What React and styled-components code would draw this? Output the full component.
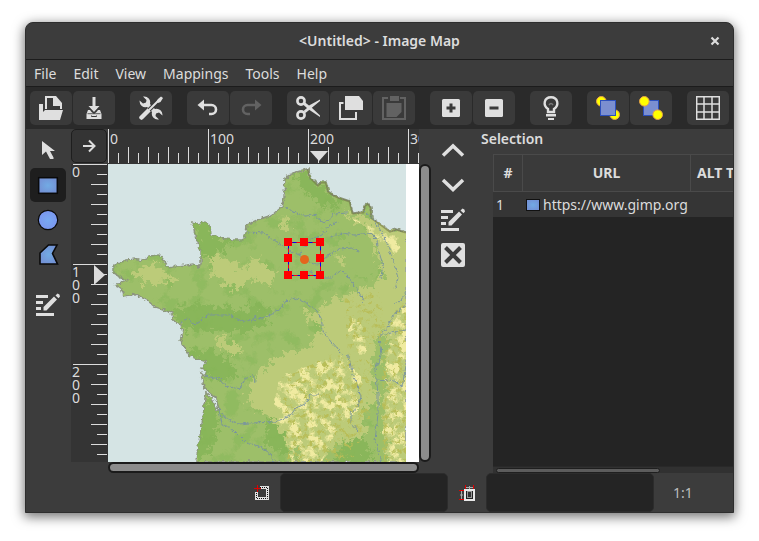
import React, { useState } from 'react';
import styled, { createGlobalStyle } from 'styled-components';

const GlobalStyle = createGlobalStyle`
  * {
    box-sizing: border-box;
  }

  body {
    margin: 0;
    background: #fff;
    color: #dcdcdc;
    font-family: 'Noto Sans', 'Open Sans', sans-serif;
    font-size: 14px;
    line-height: 20px;
  }

  button, input {
    font: inherit;
    color: inherit;
  }

  svg {
    display: block;
    flex: none;
  }
`;

const Page = styled.div`
  display: flex;
  min-height: 100vh;
  padding: 22px 25px 28px;
`;

const Window = styled.div`
  display: flex;
  flex: 1;
  flex-direction: column;
  min-width: 0;
  overflow: hidden;
  background: #3c3c3c;
  border: 1px solid #2e2e2e;
  border-radius: 8px 8px 0 0;
  box-shadow: 0 3px 12px 1px rgba(0, 0, 0, 0.55);
`;

const TitleBar = styled.header`
  display: grid;
  grid-template-columns: 36px 1fr 36px;
  align-items: center;
  height: 37px;
  border-bottom: 1px solid #1c1c1c;
`;

const Title = styled.h1`
  grid-column: 2;
  margin: 0;
  font-size: 14px;
  font-weight: 600;
  text-align: center;
`;

const CloseButton = styled.button`
  display: flex;
  align-items: center;
  justify-content: center;
  height: 36px;
  padding: 0;
  background: none;
  border: 0;
`;

const MenuBar = styled.nav`
  display: flex;
  gap: 1px;
  height: 27px;
  border-bottom: 1px solid #1c1c1c;
`;

const MenuButton = styled.button`
  padding: 2px 8px 0;
  background: none;
  border: 0;
`;

const Toolbar = styled.div`
  display: flex;
  gap: 15px;
  height: 42px;
  padding: 4px;
  overflow: hidden;
  background: #2a2a2a;
`;

const ToolGroup = styled.div`
  display: flex;
  gap: 1px;
`;

const ToolButton = styled.button`
  display: flex;
  align-items: center;
  justify-content: center;
  width: 42px;
  height: 34px;
  padding: 0;
  background: #3a3a3a;
  border: 0;
  border-radius: 5px;
  color: ${({ disabled }) => (disabled ? '#626262' : '#dfdfdf')};
`;

const Main = styled.main`
  display: grid;
  flex: 1;
  grid-template-columns: 45px minmax(0, 360fr) 44px minmax(0, 258fr);
  min-height: 0;
`;

const SideTools = styled.div`
  display: flex;
  flex-direction: column;
  gap: 1px;
  padding: 4px;
`;

const SideButton = styled.button`
  display: flex;
  align-items: center;
  justify-content: center;
  width: 36px;
  height: 34px;
  margin-top: ${({ $apart }) => ($apart ? '15px' : 0)};
  padding: 0;
  background: ${({ $active }) => ($active ? '#1e1e1e' : 'transparent')};
  border: 0;
  border-radius: 5px;
  color: #dfdfdf;
`;

const Editor = styled.section`
  display: grid;
  grid-template-areas:
    'corner top .'
    'left canvas vscroll'
    '. hscroll .';
  grid-template-columns: 37px minmax(0, 1fr) 12px;
  grid-template-rows: 35px minmax(298px, 1fr) 11px;
`;

const CornerButton = styled.button`
  display: flex;
  grid-area: corner;
  align-items: center;
  justify-content: center;
  margin: 0 1px 1px 0;
  padding: 0;
  background: #343434;
  border: 1px solid #1e1e1e;
  border-radius: 5px;
`;

const RulerBox = styled.div`
  grid-area: ${({ $area }) => $area};
  min-width: 0;
  min-height: 0;
  overflow: hidden;
  background: #343434;
`;

const RulerSvg = styled.svg`
  width: 100%;
  height: 100%;
  fill: #dcdcdc;
  font-size: 14px;
`;

const Canvas = styled.div`
  grid-area: canvas;
  min-width: 0;
  overflow: hidden;
  background: #fff;
`;

const Scrollbar = styled.div`
  grid-area: ${({ $area }) => $area};
  background: #8c8c8c;
  border: 2px solid #1b1b1b;
  border-radius: 6px;
`;

const Selection = styled.section`
  display: flex;
  flex-direction: column;
  min-width: 0;
  padding-left: 6px;
`;

const SelectionTitle = styled.h2`
  margin: 0;
  padding-bottom: 5px;
  font-size: 14px;
  font-weight: 600;
`;

const ListFrame = styled.div`
  display: flex;
  flex: 1;
  flex-direction: column;
  margin-left: 12px;
  overflow: hidden;
  background: #242424;
`;

const AreaTable = styled.table`
  width: 320px;
  table-layout: fixed;
  border-collapse: separate;
  border-spacing: 0;
`;

const HeadCell = styled.th`
  width: ${({ $width }) => $width};
  height: 38px;
  padding: 0 6px;
  overflow: hidden;
  background: #3a3a3a;
  border: solid #4a4a4a;
  border-width: 1px 1px 1px 0;
  font-weight: 700;
  text-align: ${({ $align }) => $align || 'center'};
  white-space: nowrap;

  &:first-child {
    border-left-width: 1px;
  }
`;

const Cell = styled.td`
  height: 25px;
  padding: 0 3px;
  background: #353535;
  white-space: nowrap;
`;

const UrlEntry = styled.div`
  display: flex;
  align-items: center;
  gap: 3px;
`;

const ListScroll = styled.div`
  height: 7px;
  margin-top: auto;
  padding: 1px 3px;
  background: #313131;
  border-top: 1px solid #292929;
`;

const ListThumb = styled.div`
  width: 70%;
  height: 5px;
  background: #5c5c5c;
  border: 1px solid #1f1f1f;
  border-radius: 3px;
`;

const StatusBar = styled.footer`
  display: flex;
  justify-content: flex-end;
  height: 39px;
`;

const StatusLabel = styled.label`
  display: flex;
  align-items: center;
  justify-content: center;
  width: 38px;
`;

const StatusInput = styled.input`
  width: 168px;
  min-width: 0;
  padding: 0 8px;
  background: #242424;
  border: 1px solid #2c2c2c;
  border-radius: 5px;
`;

const Zoom = styled.output`
  display: flex;
  align-items: center;
  width: 79px;
  padding-left: 19px;
  color: #bdbdbd;
`;

const Svg = ({ size = 24, children }) => (
  <svg width={size} height={size} viewBox={`0 0 ${size} ${size}`} fill="currentColor" aria-hidden="true">
    {children}
  </svg>
);

const OpenIcon = () => (
  <Svg>
    <path d="M0 8h4v8l2-2h18l-3 10H0z" />
    <path d="M7 13V1h8l7 8v4" fill="none" stroke="currentColor" strokeWidth="2" />
    <path d="M14 0h3l6 7v3h-9z" />
  </Svg>
);

const SaveIcon = () => (
  <Svg>
    <path d="M10.500 1h3v9h4L12 16l-5.500-6h4z" />
    <path d="M6 14h2l1.500 2L12 18l2.500-2 1.500-2h2l1.500 4h-15z" />
    <path d="M4.500 18h15v5h-15z" />
    <path d="M9.500 19.500v1h5v-1" fill="none" stroke="#3a3a3a" />
    <path d="M5.500 17.700h13" stroke="#3a3a3a" strokeWidth="0.800" />
  </Svg>
);

const ToolsIcon = () => (
  <Svg>
    <path d="M7 7l10 10" stroke="currentColor" strokeWidth="4" />
    <path d="M4 .6a6 6 0 0 1 6.800 8l-3 2.500A6 6 0 0 1 .6 4.500L4 7.500l3-1L7.500 4z" />
    <path d="M20 23.400a6 6 0 0 1-6.800-8l3-2.500a6 6 0 0 1 7.200 6.600L20 16.500l-3 1-.5 2.500z" />
    <path d="M3 21.500l6.500-6.500" stroke="#3a3a3a" strokeWidth="6" />
    <path d="M2.500 21.500L10 14" stroke="currentColor" strokeWidth="4.500" strokeLinecap="round" />
    <path d="M10 14L20 4" stroke="#3a3a3a" strokeWidth="4" />
    <path d="M9 15L20 4" stroke="currentColor" strokeWidth="2" />
    <path d="M19 3l3-2.500L24 2l-2.500 4-2.500 1-1.500-1.500z" />
  </Svg>
);

const UndoIcon = () => (
  <Svg>
    <path d="M8 3.500v11L1.500 9z" />
    <path d="M7 9h8.500a4.500 4.500 0 0 1 0 9H13" fill="none" stroke="currentColor" strokeWidth="2.600" />
  </Svg>
);

const RedoIcon = () => (
  <Svg>
    <path d="M16 3.500v11L22.500 9z" />
    <path d="M17 9H8.500a4.500 4.500 0 0 0 0 9H11" fill="none" stroke="currentColor" strokeWidth="2.600" />
  </Svg>
);

const CutIcon = () => (
  <Svg>
    <circle cx="5" cy="5" r="3.600" fill="none" stroke="currentColor" strokeWidth="2.600" />
    <circle cx="5" cy="19" r="3.600" fill="none" stroke="currentColor" strokeWidth="2.600" />
    <path d="M8.500 6l4.500 3.500L24 3.500V5L9.500 17 7.500 15l3.500-3-4-3.500z" />
    <path d="M12 13l3-2 9 8.500V21z" />
  </Svg>
);

const CopyIcon = () => (
  <Svg>
    <path d="M4.500 7H1v16h16v-7" fill="none" stroke="currentColor" strokeWidth="2" />
    <path d="M6 0h14l4 5v9H6z" />
  </Svg>
);

const PasteIcon = () => (
  <Svg>
    <path d="M6 2H1v21h22V2h-5" fill="none" stroke="currentColor" strokeWidth="2" />
    <path d="M8 0h9v5H8zM4.500 7h15v9l-5 5h-10z" />
  </Svg>
);

const PlusIcon = () => (
  <Svg>
    <rect x="3" y="3" width="18" height="18" rx="1.500" />
    <path d="M12 7.500v9M7.500 12h9" stroke="#3a3a3a" strokeWidth="3" />
  </Svg>
);

const MinusIcon = () => (
  <Svg>
    <rect x="3" y="3" width="18" height="18" rx="1.500" />
    <path d="M7.500 12h9" stroke="#3a3a3a" strokeWidth="3" />
  </Svg>
);

const BulbIcon = () => (
  <Svg>
    <path d="M9 16v-3C3.500 9.500 5 1.200 12 1.200S20.500 9.500 15 13v3z" fill="none" stroke="currentColor" strokeWidth="2.400" />
    <path d="M10 9q2-3 4 0" fill="none" stroke="#777" strokeWidth="1.500" />
    <path d="M7 18h10v2.500H7zM9 22h6v2H9z" />
  </Svg>
);

const Dot = ({ at }) => <circle cx={at} cy={at} r="4.800" fill="#ff0" stroke="#e6a04a" />;

const ToFrontIcon = () => (
  <Svg>
    <Dot at={5.3} />
    <Dot at={18.7} />
    <rect x="4.500" y="4.500" width="15" height="15" fill="#7b8fd0" stroke="#2c50bd" />
  </Svg>
);

const ToBackIcon = () => (
  <Svg>
    <rect x="4.500" y="4.500" width="15" height="15" fill="#7b8fd0" stroke="#2c50bd" />
    <Dot at={5.3} />
    <Dot at={18.7} />
  </Svg>
);

const GridIcon = () => (
  <Svg>
    <path
      d="M.7.7h22.600v22.600H.7zM8 1v22M16 1v22M1 8h22M1 16h22"
      fill="none"
      stroke="currentColor"
      strokeWidth="1.500"
    />
  </Svg>
);

const PointerIcon = () => (
  <Svg>
    <path d="M6 3v14l4-3.500 4 7.500h3.500v-1.500L14 13h5z" />
  </Svg>
);

const RectIcon = () => (
  <Svg>
    <rect x="2.700" y="4.700" width="18.600" height="15.600" fill="url(#area-blue)" stroke="#0a0a0a" strokeWidth="1.500" />
  </Svg>
);

const CircleIcon = () => (
  <Svg>
    <circle cx="12" cy="12" r="9.700" fill="url(#area-circle)" stroke="#0a0a0a" strokeWidth="1.200" />
  </Svg>
);

const PolygonIcon = () => (
  <Svg>
    <path d="M4 21V10l8.500-8H21l-4.500 8.500L21.500 21z" fill="url(#area-blue)" stroke="#0a0a0a" strokeWidth="1.600" />
  </Svg>
);

const EditIcon = () => (
  <Svg>
    <path d="M0 2h12v3H0zM0 8h7v3H0zM0 14h5v3H0zM0 20h18v3H0z" />
    <path d="M7.500 17.500v-3.500L18 3.500l3 3L10.500 17.500zM19.500 2.500L21.500.5q2.500.5 2.500 3l-1.500 1.700z" />
  </Svg>
);

const UpIcon = () => (
  <Svg>
    <path d="M2 17.500L12 8l10 9.500" fill="none" stroke="currentColor" strokeWidth="3.500" />
  </Svg>
);

const DownIcon = () => (
  <Svg>
    <path d="M2 7l10 9.500L22 7" fill="none" stroke="currentColor" strokeWidth="3.500" />
  </Svg>
);

const DeleteIcon = () => (
  <Svg>
    <rect width="24" height="24" rx="2" />
    <path d="M4.500 4.500l15 15M19.500 4.500l-15 15" stroke="#3c3c3c" strokeWidth="4" />
  </Svg>
);

const ArrowIcon = () => (
  <Svg size={16}>
    <path d="M2 8h11M8 2.500L13.500 8 8 13.500" fill="none" stroke="currentColor" strokeWidth="2" />
  </Svg>
);

const CloseIcon = () => (
  <Svg size={16}>
    <path d="M4.500 4.500l7 7M11.500 4.500l-7 7" stroke="currentColor" strokeWidth="2.200" />
  </Svg>
);

const OriginIcon = () => (
  <Svg size={16}>
    <path d="M7 2.500h7.500v11h-11V7" fill="none" stroke="#e2e2e2" strokeWidth="3" />
    <path d="M7 2.500h7.500v11h-11V7" fill="none" stroke="#111" strokeDasharray="1 1" />
    <path d="M1 3.500h7M4.500 0v7" stroke="#e00000" />
  </Svg>
);

const SizeIcon = () => (
  <Svg size={16}>
    <rect x="6" y="5" width="9" height="10" fill="#222" stroke="#e8e8e8" strokeWidth="2" />
    <rect x="8.500" y="6.500" width="4" height="6" fill="#333" stroke="#999" />
    <path d="M7 2.500h7M10.500 1v3M2.500 6v8M1 10h3" stroke="#aaa" />
    <path d="M6.500 0v4M14.500 0v4M0 5.500h5M0 14.500h5" stroke="#e00000" />
  </Svg>
);

const toolbarGroups = [
  [['Open', OpenIcon], ['Save', SaveIcon]],
  [['Preferences', ToolsIcon]],
  [['Undo', UndoIcon], ['Redo', RedoIcon, true]],
  [['Cut', CutIcon], ['Copy', CopyIcon], ['Paste', PasteIcon, true]],
  [['Zoom in', PlusIcon], ['Zoom out', MinusIcon]],
  [['Edit map info', BulbIcon]],
  [['Move to front', ToFrontIcon], ['Send to back', ToBackIcon]],
  [['Grid', GridIcon]],
];

const shapeTools = [
  ['Arrow', PointerIcon],
  ['Rectangle', RectIcon],
  ['Circle', CircleIcon],
  ['Polygon', PolygonIcon],
];

const listTools = [
  ['Move up', UpIcon],
  ['Move down', DownIcon],
  ['Edit', EditIcon],
  ['Delete', DeleteIcon],
];

const menus = ['File', 'Edit', 'View', 'Mappings', 'Tools', 'Help'];

// the rulers cover the 300px image and a little beyond it
const marksUpTo = (end) => Array.from({ length: end / 10 + 1 }, (_, i) => i * 10);

const tickLength = (mark) => {
  if (mark % 100 === 0) return 34;
  return mark % 20 === 0 ? 16 : 10;
};

const HorizontalRuler = ({ position }) => {
  const marks = marksUpTo(310);
  return (
    <RulerBox $area="top">
      <RulerSvg>
        {marks.map((mark) => {
          const length = tickLength(mark);
          return <rect key={mark} x={mark} y={34 - length} width="1" height={length} />;
        })}
        {marks.filter((mark) => mark % 100 === 0).map((mark) => (
          <text key={mark} x={mark + 2} y="15">{mark}</text>
        ))}
        <path d={`M${position - 9} 22h18l-9 10z`} />
      </RulerSvg>
    </RulerBox>
  );
};

const VerticalRuler = ({ position }) => {
  const marks = marksUpTo(290);
  return (
    <RulerBox $area="left">
      <RulerSvg>
        {marks.map((mark) => {
          const length = tickLength(mark);
          return <rect key={mark} x={36 - length} y={mark} width={length} height="1" />;
        })}
        {marks.filter((mark) => mark % 100 === 0).map((mark) => (
          <text key={mark}>
            {String(mark).split('').map((digit, i) => (
              <tspan key={i} x="1" y={mark + 13 + i * 13}>{digit}</tspan>
            ))}
          </text>
        ))}
        <path d={`M23 ${position - 10}v20l11-10z`} />
      </RulerSvg>
    </RulerBox>
  );
};

const coast =
  'M5 103L9 99 19 96 27 95 32 97 39 94 42 92 52 91 57 98 61 104 69 102 79 101 85 100 89 103 93 101 93 86 90 79 87 71 86 65 84 59 ' +
  '89 60 97 58 102 61 103 71 112 73 118 75 125 76 135 76 138 69 139 61 149 56 164 51 174 43 176 33 177 14 185 9 200 5 203 14 ' +
  '210 21 213 18 218 18 221 28 230 33 242 37 245 49 255 48 256 42 260 39 263 43 264 54 274 61 282 67 288 65 298 68 V298 H88 ' +
  'L90 283 93 266 95 253 96 241 98 229 104 234 108 246 111 246 108 234 96 223 93 209 97 213 99 207 93 204 99 198 90 195 81 191 ' +
  '72 176 75 168 72 159 65 157 64 149 56 146 47 143 39 136 27 130 16 132 14 126 7 121 12 119 19 117 12 113 5 109z';

const rivers = [
  'M176 41l9 7 12 4 9-1 8 7 7-2 5-6 13-1',
  'M139 68l17 1 16 11 9 6 10 5 5-7 4-7 14-6 8-10 8-3',
  'M191 91l10 7 9 2 12-10 10-5 12-1 7 3',
  'M222 73l13-4 11 2 16-2 7 7 2 12 4 13-2 13',
  'M257 48l10 9 7 12 6 13 6 18 4 14-3 12',
  'M202 106l5 8 15 0 12-8 11 13 12 19',
  'M72 159l7-5 8 7 6-4 6-6h22l15 7 12-5',
  'M142 158l18-6 12-7 6-8 9-3 10 4 11 8 5 8 2 13 8 11 9 10 9 5 3 15 4 10 5 15-3 10-7 6v10l7 8',
  'M97 212l15 3 6 7 14 3 4-9 9-6 2 8',
  'M109 243l7 10 14 7 13-1 24-1 15-6 6-8 9-4 5-9h9',
  'M111 246l3 14 11 6 13 13 13 3 12 8 3 9',
  'M298 141l-11 8-7 13-9 11 2 18-6 15 3 23 0 21-3 27 4 13 4 12',
  'M298 166l-11 2-12 3M269 216l11 1 4-2 10 8 4-21M298 128l-5 9-7 3',
];

const MapImage = () => (
  <svg width="298" height="298" viewBox="0 0 298 298" role="img" aria-label="Relief map of France">
    <defs>
      <clipPath id="land">
        <path d={coast} />
      </clipPath>
      <filter id="lowland" x="0" y="0" width="100%" height="100%" colorInterpolationFilters="sRGB">
        <feTurbulence type="fractalNoise" baseFrequency="0.06" numOctaves="5" seed="8" />
        <feColorMatrix values="0 0 0 0 0.51  0 0 0 0 0.71  0 0 0 0 0.34  7 0 0 0 -3.800" />
      </filter>
      <filter id="hills" x="0" y="0" width="100%" height="100%" colorInterpolationFilters="sRGB">
        <feTurbulence type="fractalNoise" baseFrequency="0.11" numOctaves="5" seed="23" />
        <feColorMatrix values="0 0 0 0 0.94  0 0 0 0 0.92  0 0 0 0 0.63  0 5 0 0 -2.200" />
        <feComposite in2="SourceAlpha" operator="in" />
      </filter>
      <filter id="relief" x="0" y="0" width="100%" height="100%" colorInterpolationFilters="sRGB">
        <feTurbulence type="fractalNoise" baseFrequency="0.2" numOctaves="4" seed="5" />
        <feColorMatrix values="0 0 0 0 0.72  0 0 0 0 0.74  0 0 0 0 0.34  0 0 5 0 -2.700" />
        <feComposite in2="SourceAlpha" operator="in" />
      </filter>
      <filter id="rough" x="-5%" y="-5%" width="110%" height="110%" colorInterpolationFilters="sRGB">
        <feTurbulence type="fractalNoise" baseFrequency="0.16" numOctaves="4" seed="2" />
        <feDisplacementMap in="SourceGraphic" scale="20" xChannelSelector="R" yChannelSelector="G" />
      </filter>
      <filter id="shore" x="0" y="0" width="100%" height="100%" colorInterpolationFilters="sRGB">
        <feTurbulence type="fractalNoise" baseFrequency="0.3" numOctaves="2" seed="4" />
        <feDisplacementMap in="SourceGraphic" scale="5" xChannelSelector="R" yChannelSelector="G" />
      </filter>
    </defs>
    <rect width="298" height="298" fill="#d5e4e4" />
    <g filter="url(#shore)">
      <path d={coast} fill="#9dbf69" stroke="#8d957f" strokeWidth="1.500" />
      <g clipPath="url(#land)">
        <rect width="298" height="298" filter="url(#lowland)" opacity="0.45" />
        <g fill="#85b557" opacity="0.8" filter="url(#rough)">
          <path d="M84 58h20v14l22 6-12 10-20 8zM185 8l20 6 32 26-12 6-25-14zM66 144l30-4 50 8 16 14-34 6-50-2-10-10zM82 188l20-4 20 14 8 14-14 4-20-6zM97 230l16 20-6 30-16 18h-4zM142 140l20 4 2 10-30 4z" />
          <path d="M160 248l18 12 8 18-10 12-18-8zM235 280l18-12 14 30h-40z" />
        </g>
        <g fill="#bccb79" filter="url(#rough)">
          <path d="M234 48l24 4 44 20v170h-60l-30-40-30-10 20-8 12-20-12-14 20-14 20-6 18-8 14-6-4-24-12-30z" />
          <path d="M142 222l14-18 22-16 28-4 44 40 8 46-30 10-24 22-24-20-14-26-18-10zM276 160h24v140h-16l-8-40z" />
          <path d="M24 106l22-6 12 8 10 8-18 4-16-2zM100 90l22 6 14 10 8-14 20 12 2 18-20-6-18 10-22-14zM171 56l8-4 6 8-10 6zM225 90l16-4 4 6-14 8zM108 172l14 6 12 8-6 6-16-8zM138 236l8-26 8 22-6 16zM196 150l14-4 2 8-14 6z" />
        </g>
        <g fill="#9dbf69" filter="url(#rough)">
          <path d="M240 66l20 2 8 14 2 24-8 12-20-14-12-20z" />
          <path d="M266 176l10-8 6 10-6 20 4 16-4 30 4 54h-14l4-60-6-30z" />
        </g>
        <g filter="url(#hills)">
          <path d="M172 212l34-12 28-8 20 22-2 30-24 20-14 34h-30l-10-30-8-30zM246 150l14 20-4 30-16-34zM284 160l14-20v90l-22-12zM280 226l18-4v76h-20l-4-30zM240 54l20 4 38 20-12 12-30-28z" />
        </g>
        <g filter="url(#relief)">
          <path d="M174 214l50-24 40 8-2 56-20 44h-62zM274 170l24-40v168h-22zM236 130l36-2 6 46-38 18z" />
        </g>
      </g>
    </g>
    <g clipPath="url(#land)" fill="none">
      <path
        d="M200 5l3 9 7 7 3-3h5l3 10 9 5 12 4 3 12 10-1 1-6 4-3 3 4 1 11 10 7 8 6 6-2 10 3"
        stroke="#717447"
        strokeWidth="3"
        opacity="0.6"
      />
      <g stroke="#7893a0" opacity="0.9" filter="url(#shore)">
        {rivers.map((river) => <path key={river} d={river} />)}
      </g>
    </g>
    <circle cx="196.500" cy="95.500" r="4.500" fill="#e5651d" />
    <path d="M180.500 78.500h32v33h-32z" fill="none" stroke="#0000f0" />
    <path d="M180.500 78.500h32v33h-32z" fill="none" stroke="#f00" strokeDasharray="4 4" />
    <g fill="#f00">
      {[74, 90, 107].map((y) =>
        [176, 192, 208]
          .filter((x) => !(x === 192 && y === 90))
          .map((x) => <rect key={`${x}-${y}`} x={x} y={y} width="8" height="8" />)
      )}
    </g>
  </svg>
);

const App = () => {
  const [tool, setTool] = useState('Rectangle');
  const [origin, setOrigin] = useState('');
  const [size, setSize] = useState('');

  return (
    <Page>
      <GlobalStyle />
      {/* gradients shared by the area icons */}
      <svg width="0" height="0" aria-hidden="true">
        <defs>
          <radialGradient id="area-blue">
            <stop offset="0" stopColor="#72abe4" />
            <stop offset="1" stopColor="#7393d6" />
          </radialGradient>
          <radialGradient id="area-circle">
            <stop offset="0" stopColor="#78aaf2" />
            <stop offset="1" stopColor="#7b96f0" />
          </radialGradient>
        </defs>
      </svg>
      <Window>
        <TitleBar>
          <Title>&lt;Untitled&gt; - Image Map</Title>
          <CloseButton aria-label="Close">
            <CloseIcon />
          </CloseButton>
        </TitleBar>
        <MenuBar>
          {menus.map((menu) => <MenuButton key={menu}>{menu}</MenuButton>)}
        </MenuBar>
        <Toolbar>
          {toolbarGroups.map((group) => (
            <ToolGroup key={group[0][0]}>
              {group.map(([name, Icon, disabled]) => (
                <ToolButton key={name} aria-label={name} disabled={disabled}>
                  <Icon />
                </ToolButton>
              ))}
            </ToolGroup>
          ))}
        </Toolbar>
        <Main>
          <SideTools>
            {shapeTools.map(([name, Icon]) => (
              <SideButton key={name} aria-label={name} $active={tool === name} onClick={() => setTool(name)}>
                <Icon />
              </SideButton>
            ))}
            <SideButton aria-label="Edit area info" $apart>
              <EditIcon />
            </SideButton>
          </SideTools>
          <Editor>
            <CornerButton aria-label="Image menu">
              <ArrowIcon />
            </CornerButton>
            <HorizontalRuler position={211} />
            <VerticalRuler position={111} />
            <Canvas>
              <MapImage />
            </Canvas>
            <Scrollbar $area="vscroll" />
            <Scrollbar $area="hscroll" />
          </Editor>
          <SideTools>
            {listTools.map(([name, Icon]) => (
              <SideButton key={name} aria-label={name}>
                <Icon />
              </SideButton>
            ))}
          </SideTools>
          <Selection>
            <SelectionTitle>Selection</SelectionTitle>
            <ListFrame>
              <AreaTable>
                <thead>
                  <tr>
                    <HeadCell $width="30px">#</HeadCell>
                    <HeadCell $width="168px">URL</HeadCell>
                    <HeadCell $align="left">ALT Text</HeadCell>
                  </tr>
                </thead>
                <tbody>
                  <tr>
                    <Cell>1</Cell>
                    <Cell>
                      <UrlEntry>
                        <svg width="14" height="12" aria-hidden="true">
                          <rect x="0.500" y="0.500" width="13" height="11" fill="url(#area-blue)" stroke="#111" />
                        </svg>
                        https://www.gimp.org
                      </UrlEntry>
                    </Cell>
                    <Cell />
                  </tr>
                </tbody>
              </AreaTable>
              <ListScroll>
                <ListThumb />
              </ListScroll>
            </ListFrame>
          </Selection>
        </Main>
        <StatusBar>
          <StatusLabel htmlFor="origin" aria-label="Origin">
            <OriginIcon />
          </StatusLabel>
          <StatusInput id="origin" value={origin} onChange={(e) => setOrigin(e.target.value)} />
          <StatusLabel htmlFor="size" aria-label="Size">
            <SizeIcon />
          </StatusLabel>
          <StatusInput id="size" value={size} onChange={(e) => setSize(e.target.value)} />
          <Zoom>1:1</Zoom>
        </StatusBar>
      </Window>
    </Page>
  );
};

export default App;
